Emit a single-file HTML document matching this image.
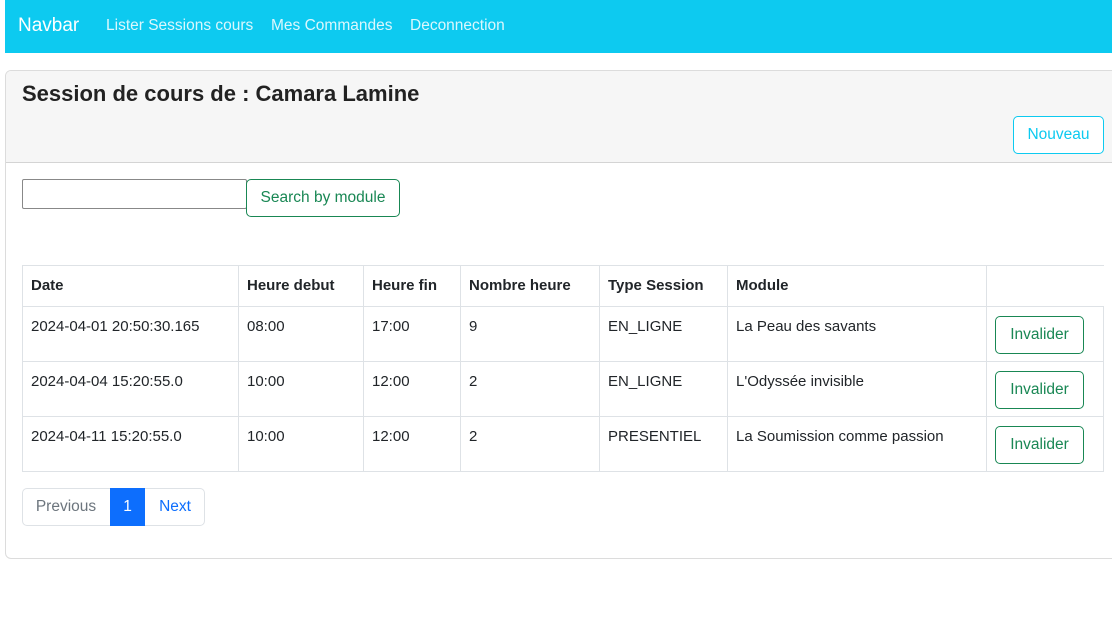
<!DOCTYPE html>
<html><head><meta charset="utf-8"><style>
*{box-sizing:border-box;margin:0;padding:0}
body{width:1112px;height:642px;background:#fff;font-family:"Liberation Sans",sans-serif;color:#212529;position:relative;overflow:hidden;font-size:15px}
.a{position:absolute}
.nav{left:5px;top:0;width:1107px;height:53px;background:#0dcaf0}
.nav span{position:absolute;top:17px;color:rgba(255,255,255,.85);font-size:15.5px}
.card{left:5px;top:70px;width:1120px;height:489px;border:1px solid #dcdcdc;border-radius:6px}
.hdr{left:6px;top:71px;width:1106px;height:92px;background:#f6f6f6;border-bottom:1px solid #d4d4d4;border-top-left-radius:5px}
.btn{position:absolute;border-radius:5px;background:#fff;text-align:center;font-size:15.5px}
table{position:absolute;left:22px;top:265px;border-collapse:collapse}
td,th{border:1px solid #dee2e6;text-align:left;vertical-align:top;padding:11px 8px 0 8px;font-size:15px}
th{height:41px;font-weight:bold}
td{height:55px}
.inv{position:relative;display:block;width:89px;height:38px;border:1px solid #198754;color:#198754;border-radius:5px;line-height:36px;text-align:center;font-size:15.5px;margin-top:-2px}
</style></head><body>
<div class="a nav">
<span style="left:13px;top:15px;font-size:19px;color:#fff">Navbar</span>
<span style="left:101px">Lister Sessions cours</span>
<span style="left:266px">Mes Commandes</span>
<span style="left:405px">Deconnection</span>
</div>
<div class="a card"></div>
<div class="a hdr"></div>
<div class="a" style="left:22px;top:81px;font-size:22px;font-weight:bold;color:#222">Session de cours de : Camara Lamine</div>
<div class="btn" style="left:1013px;top:116px;width:91px;height:38px;border:1px solid #0dcaf0;color:#0dcaf0;line-height:36px">Nouveau</div>
<div class="a" style="left:22px;top:179px;width:225px;height:30px;border:1px solid #888;border-radius:2px"></div>
<div class="btn" style="left:246px;top:179px;width:154px;height:38px;border:1px solid #198754;color:#198754;line-height:36px">Search by module</div>
<table>
<tr><th style="width:216px">Date</th><th style="width:125px">Heure debut</th><th style="width:97px">Heure fin</th><th style="width:139px">Nombre heure</th><th style="width:128px">Type Session</th><th style="width:259px">Module</th><th style="width:117px;border-right:none"></th></tr>
<tr><td>2024-04-01 20:50:30.165</td><td>08:00</td><td>17:00</td><td>9</td><td>EN_LIGNE</td><td>La Peau des savants</td><td><span class="inv">Invalider</span></td></tr>
<tr><td>2024-04-04 15:20:55.0</td><td>10:00</td><td>12:00</td><td>2</td><td>EN_LIGNE</td><td>L'Odyssée invisible</td><td><span class="inv">Invalider</span></td></tr>
<tr><td>2024-04-11 15:20:55.0</td><td>10:00</td><td>12:00</td><td>2</td><td>PRESENTIEL</td><td>La Soumission comme passion</td><td><span class="inv">Invalider</span></td></tr>
</table>
<div class="a" style="left:22px;top:488px;width:183px;height:38px;border:1px solid #dee2e6;border-radius:5px"></div>
<div class="a" style="left:22px;top:489px;width:88px;height:38px;line-height:36px;text-align:center;color:#6c757d;font-size:15.5px">Previous</div>
<div class="a" style="left:110px;top:488px;width:35px;height:38px;line-height:38px;text-align:center;background:#0d6efd;color:#fff;font-size:15.5px">1</div>
<div class="a" style="left:145px;top:489px;width:60px;height:38px;line-height:36px;text-align:center;color:#0d6efd;font-size:15.5px">Next</div>
</body></html>
